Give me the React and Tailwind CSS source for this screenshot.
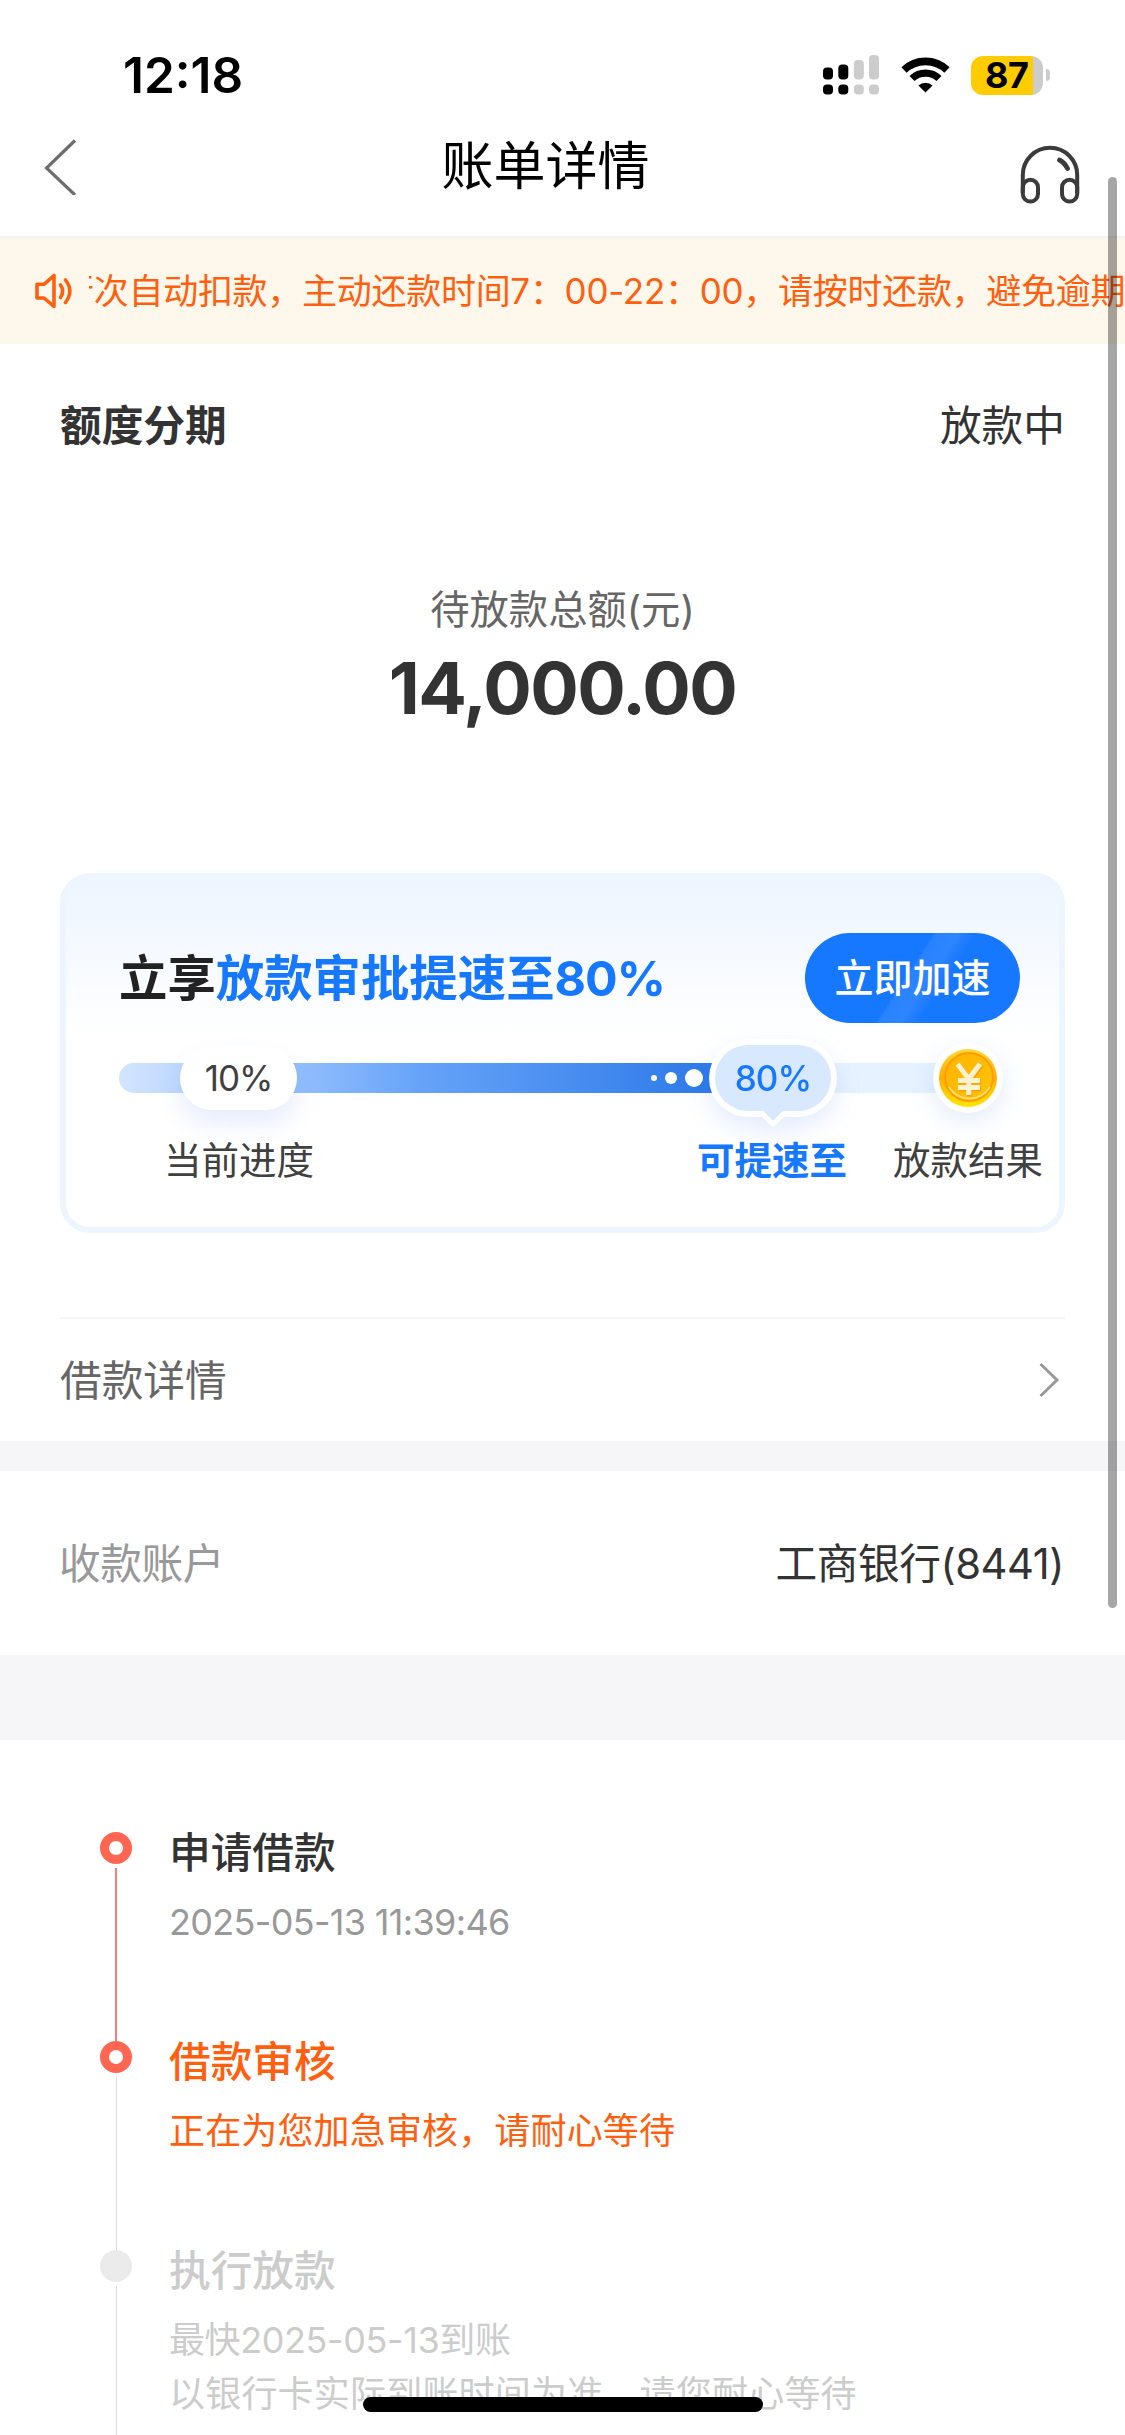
const steps = [
  {
    title: "申请借款",
    lines: [{ text: "2025-05-13 11:39:46", spacing: "tracking-[-0.67px]" }],
    titleClass: "text-[#333333]",
    textClass: "text-[#999999]",
    lineClass: "w-[2px] bg-[#f97a80]",
    done: true,
  },
  {
    title: "借款审核",
    lines: [{ text: "正在为您加急审核，请耐心等待", spacing: "tracking-[0.15px]" }],
    titleClass: "text-[#ff6010]",
    textClass: "text-[#ff6010]",
    lineClass: "w-px bg-[#dddddd]",
    done: true,
  },
  {
    title: "执行放款",
    lines: [
      { text: "最快2025-05-13到账", spacing: "tracking-[-0.4px]" },
      { text: "以银行卡实际到账时间为准，请您耐心等待", spacing: "tracking-[0.2px]" },
    ],
    titleClass: "text-[#cccccc]",
    textClass: "text-[#cccccc]",
    lineClass: "w-px bg-[#dddddd]",
    done: false,
  },
];

function SignalIcon() {
  return (
    <svg className="h-[40px] w-[57px]" viewBox="0 0 57 40">
      <g fill="#000">
        <rect x="0" y="12.5" width="10" height="12" rx="4" />
        <rect x="15.3" y="9.5" width="10" height="15" rx="4" />
        <rect x="0" y="29.5" width="10" height="10" rx="4" />
        <rect x="15.3" y="29.5" width="10" height="10" rx="4" />
      </g>
      <g fill="#cccccc">
        <rect x="30.8" y="5" width="10" height="19.5" rx="4" />
        <rect x="46" y="0" width="10" height="24.5" rx="4" />
        <rect x="30.8" y="29.5" width="10" height="10" rx="4" />
        <rect x="46" y="29.5" width="10" height="10" rx="4" />
      </g>
    </svg>
  );
}

function WifiIcon() {
  return (
    <svg className="h-[36px] w-[49px]" viewBox="0 0 49 36" fill="none" stroke="#000">
      <path d="M3 13 A31 31 0 0 1 46 13" strokeWidth="7.6" />
      <path d="M11 21.5 A19.5 19.5 0 0 1 38 21.5" strokeWidth="7.2" />
      <path d="M24.5 35.5 L17.4 28.6 A10.4 10.4 0 0 1 31.6 28.6 Z" fill="#000" stroke="none" />
    </svg>
  );
}

function Battery() {
  return (
    <div className="flex items-center gap-[3px]">
      <div className="flex h-[39px] w-[72px] items-center rounded-[12px] bg-linear-to-r from-[#ffcc00] from-[62.5px] to-[#cccccc] to-[62.5px] pl-[14px] text-[36px] leading-[39px] font-bold tracking-[-0.5px] text-black">
        87
      </div>
      <div className="h-[12px] w-[4px] rounded-r-full bg-[#cccccc]" />
    </div>
  );
}

function HeadphonesIcon() {
  return (
    <svg className="h-[60px] w-[60px]" viewBox="0 0 60 60" fill="none" stroke="#3b3b3b" strokeWidth="4">
      <path d="M2.8 49 V31 A27.2 27.2 0 0 1 57.2 31 V49" />
      <rect x="2.8" y="35.8" width="15.2" height="21.8" rx="7.6" />
      <rect x="42" y="35.8" width="15.2" height="21.8" rx="7.6" />
      <path d="M39.5 16 Q44.5 18.5 47.5 24.5" strokeWidth="4.8" strokeLinecap="round" />
    </svg>
  );
}

function SpeakerIcon() {
  return (
    <svg className="h-[36px] w-[38px]" viewBox="0 0 38 36" fill="none" stroke="#ff6010" strokeWidth="3.6">
      <path d="M2 11.3 H9 L19 2.5 V33.5 L9 25 H2 Z" strokeLinejoin="round" />
      <path d="M25.5 12 Q29.8 18 25.5 24.5" strokeLinecap="round" />
      <path d="M30.5 7 Q39.2 18 30.5 29.5" strokeLinecap="round" />
    </svg>
  );
}

function CoinIcon() {
  return (
    <svg className="h-[58px] w-[58px]" viewBox="0 0 58 58">
      <defs>
        <linearGradient id="coinRim" x1="0" y1="0" x2="0" y2="1">
          <stop offset="0" stopColor="#ffd83a" />
          <stop offset="0.5" stopColor="#ffae00" />
          <stop offset="1" stopColor="#ffe600" />
        </linearGradient>
        <linearGradient id="coinFace" x1="0" y1="0" x2="1" y2="1">
          <stop offset="0" stopColor="#ffb300" />
          <stop offset="1" stopColor="#ffc50a" />
        </linearGradient>
      </defs>
      <circle cx="29" cy="29" r="29" fill="url(#coinRim)" />
      <circle cx="30" cy="28" r="24" fill="url(#coinFace)" stroke="#ff9d00" strokeWidth="2" />
      <path d="M10 38 A24 24 0 0 0 51 38" fill="none" stroke="#ffe27a" strokeWidth="1.5" />
      <path
        d="M18.5 15 L29.8 30 L41 15 M29.8 28 V46 M19 31.5 H41 M19 38.5 H41"
        fill="none"
        stroke="#ffa000"
        strokeWidth="5.2"
        transform="translate(1 1.4)"
      />
      <path
        d="M18.5 15 L29.8 30 L41 15 M29.8 28 V46 M19 31.5 H41 M19 38.5 H41"
        fill="none"
        stroke="#fff3cf"
        strokeWidth="5"
      />
    </svg>
  );
}

function ProgressTrack() {
  return (
    <div className="relative flex h-[30px] w-[880px] rounded-full bg-[#e6f2ff]">
      <div className="flex h-full w-[600px] items-center justify-end gap-[8px] rounded-l-full bg-linear-to-r from-[#d4e5ff] via-[#66a3f8] via-50% to-[#2a78e8] pr-[16px]">
        <span className="size-[6px] rounded-full bg-white" />
        <span className="size-[12px] rounded-full bg-white" />
        <span className="size-[18px] rounded-full bg-white" />
      </div>

      <div className="absolute top-[-17px] left-[61px] flex h-[64px] w-[117px] items-center justify-center rounded-full bg-white text-[35px] tracking-[-1px] text-[#404040] shadow-[0_14px_24px_rgba(60,110,240,0.12)]">
        10%
      </div>

      <div className="absolute top-[-24px] left-[590px] drop-shadow-[0_10px_12px_rgba(60,110,240,0.14)]">
        <div className="relative flex h-[78px] w-[128px] items-center justify-center rounded-full bg-white">
          <span className="absolute bottom-[-6px] left-[52px] size-[24px] rotate-45 rounded-[3px] bg-white" />
          <span className="absolute bottom-0 left-[55px] size-[18px] rotate-45 bg-[#d8e8ff]" />
          <span className="relative flex h-[66px] w-[116px] items-center justify-center rounded-full bg-[#d8e8ff] text-[35px] font-medium tracking-[-1px] text-[#1677ff]">
            80%
          </span>
        </div>
      </div>

      <div className="absolute top-[-20px] left-[814px] flex size-[70px] items-center justify-center rounded-full bg-white shadow-[0_8px_24px_rgba(60,110,240,0.14)]">
        <CoinIcon />
      </div>
    </div>
  );
}

function SpeedUpCard() {
  return (
    <section className="flex h-[360px] flex-col rounded-[30px] border-[6px] border-[#edf6ff] bg-linear-to-b from-[#edf5ff] to-white to-45% pt-[54px] pl-[53px]">
      <div className="flex h-[90px] items-center justify-between pr-[39px]">
        <h2 className="pt-[2px] text-[48.4px] leading-[60px] font-bold text-[#222222]">
          立享<span className="font-semibold text-[#1677ff]">放款审批提速至</span>
          <span className="tracking-[-1px] text-[#1677ff]">80%</span>
        </h2>
        <button className="h-[90px] w-[215px] rounded-full bg-[#1677ff] bg-[linear-gradient(123deg,transparent_47%,rgba(255,255,255,0.08)_48%,rgba(255,255,255,0.1)_56%,transparent_63%)] text-[39px] leading-[90px] font-medium text-white">
          立即加速
        </button>
      </div>
      <div className="mt-[40px]">
        <ProgressTrack />
      </div>
      <div className="mt-[43px] flex text-[37.5px] leading-[50px] text-[#404040]">
        <span className="ml-[45px]">当前进度</span>
        <span className="ml-[383px] font-semibold text-[#1677ff]">可提速至</span>
        <span className="ml-[46px]">放款结果</span>
      </div>
    </section>
  );
}

function Timeline() {
  return (
    <ol className="flex flex-1 flex-col pt-[92px] pl-[100px]">
      {steps.map((step, i) => (
        <li key={step.title} className={i === steps.length - 1 ? "flex flex-1 gap-[37px]" : "flex h-[209px] gap-[37px]"}>
          <div className="flex w-[32px] flex-col items-center gap-[4px]">
            {step.done ? (
              <span className="size-[32px] shrink-0 rounded-full border-[9.5px] border-[#ff6651]" />
            ) : (
              <span className="size-[32px] shrink-0 rounded-full bg-[#ebebeb]" />
            )}
            <span className={`flex-1 ${step.lineClass}`} />
          </div>
          <div className="whitespace-nowrap">
            <h3 className={`text-[41.7px] leading-[42px] font-medium ${step.titleClass}`}>{step.title}</h3>
            <div className={`mt-[21px] text-[36px] leading-[54px] ${step.textClass}`}>
              {step.lines.map((line) => (
                <p key={line.text} className={line.spacing}>
                  {line.text}
                </p>
              ))}
            </div>
          </div>
        </li>
      ))}
    </ol>
  );
}

export default function App() {
  return (
    <div className="relative flex h-[2435px] w-[1125px] flex-col overflow-hidden bg-white font-['Inter','Noto_Sans_CJK_SC',sans-serif] text-[#333333]">
      <div className="flex h-[110px] items-center justify-between pt-[40px] pr-[75px] pl-[123px]">
        <span className="text-[49.5px] leading-[70px] font-semibold text-black">12:18</span>
        <div className="flex items-center">
          <SignalIcon />
          <div className="ml-[21px]">
            <WifiIcon />
          </div>
          <div className="ml-[21px]">
            <Battery />
          </div>
        </div>
      </div>

      <header className="flex h-[128px] items-center justify-between border-b-2 border-[#f2f2f2] pr-[45px] pb-[13px] pl-[43px]">
        <svg className="h-[56px] w-[34px]" viewBox="0 0 34 56" fill="none" stroke="#6e6e6e" strokeWidth="3.2">
          <path d="M32 1.5 L3.5 29 L32 56" />
        </svg>
        <h1 className="pr-[6px] text-[52px] leading-[112px] text-black">账单详情</h1>
        <div className="pt-[14px]">
          <HeadphonesIcon />
        </div>
      </header>

      <div className="flex h-[106px] items-center bg-[#fef8ec] pl-[35px]">
        <SpeakerIcon />
        <div className="ml-[16px] flex flex-1 justify-start overflow-hidden">
          <p className="ml-[-30px] text-[35px] leading-[52px] tracking-[-0.28px] whitespace-nowrap text-[#ff6010]">
            行次自动扣款，主动还款时间7：00-22：00，请按时还款，避免逾期
          </p>
        </div>
      </div>

      <main className="flex flex-col px-[60px]">
        <div className="flex justify-between pt-[52px] text-[41.7px] leading-[60px]">
          <h2 className="font-bold">额度分期</h2>
          <span>放款中</span>
        </div>
        <div className="flex flex-col items-center pt-[124px]">
          <p className="text-[39.3px] leading-[60px] text-[#666666]">待放款总额(元)</p>
          <p className="mt-[6px] text-[72px] leading-[84px] font-bold tracking-[-1.6px]">14,000.00</p>
        </div>
        <div className="mt-[143px]">
          <SpeedUpCard />
        </div>
        <div className="mt-[84px] flex h-[124px] items-center justify-between border-t-2 border-[#f5f5f5]">
          <span className="pt-[2px] text-[41.7px] leading-[60px] text-[#666666]">借款详情</span>
          <svg className="mr-[5px] h-[36px] w-[22px]" viewBox="0 0 22 36" fill="none" stroke="#999999" strokeWidth="3">
            <path d="M2.5 2 L19 18 L2.5 34" />
          </svg>
        </div>
      </main>

      <div className="h-[30px] bg-[#f6f6f9]" />
      <div className="flex h-[184px] items-center justify-between pt-[2px] pr-[61px] pl-[59px] text-[41.7px] leading-[60px]">
        <span className="tracking-[-0.4px] text-[#999999]">收款账户</span>
        <span className="tracking-[-0.45px]">工商银行(8441)</span>
      </div>
      <div className="h-[85px] bg-[#f6f6f9]" />

      <Timeline />

      <div className="absolute top-[177px] left-[1108px] h-[1431px] w-[9px] rounded-full bg-black/35" />
      <div className="absolute top-[2397px] left-[363px] h-[15px] w-[400px] rounded-full bg-black" />
    </div>
  );
}
